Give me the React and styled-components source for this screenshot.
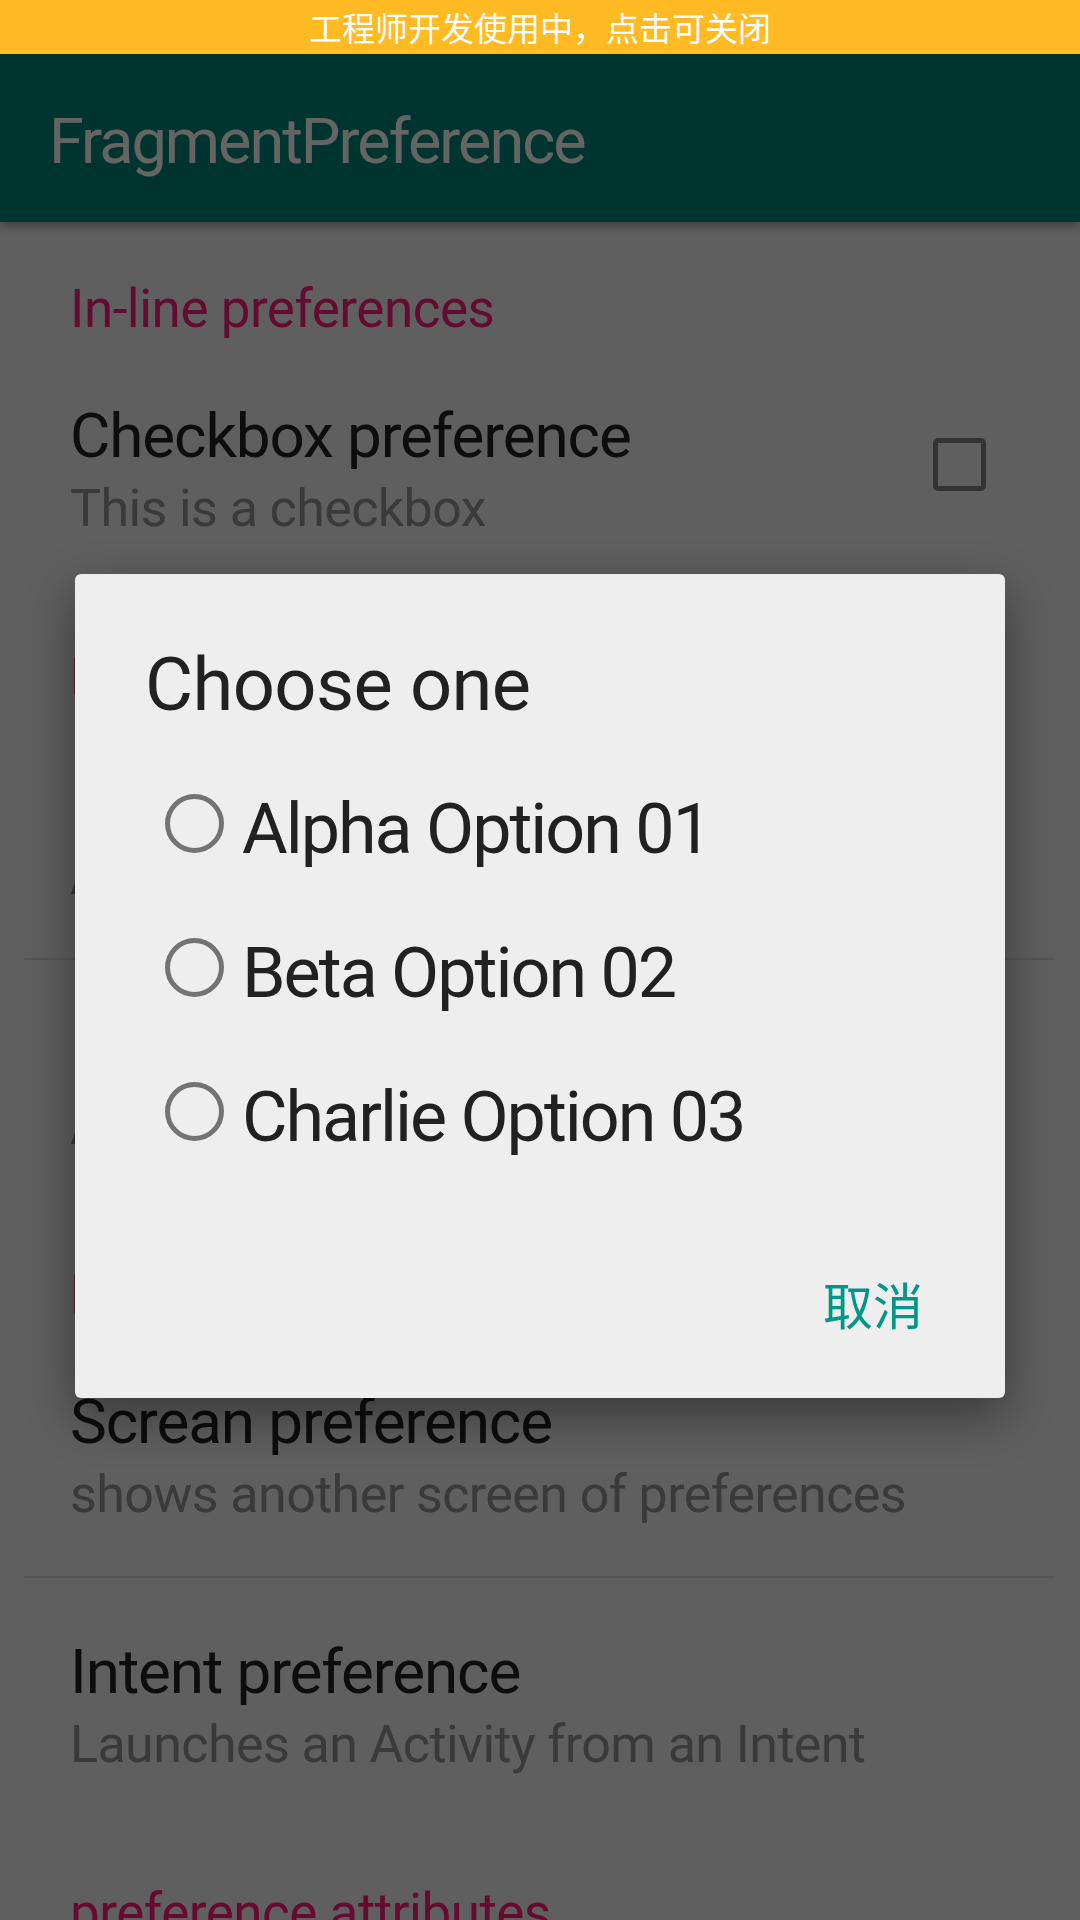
import React from 'react';
import styled, { createGlobalStyle } from 'styled-components';

const GlobalStyle = createGlobalStyle`
  html, body {
    margin: 0;
    padding: 0;
  }
  body {
    width: 1080px;
    height: 1920px;
    overflow: hidden;
    background: #eeeeee;
    font-family: Roboto, "Noto Sans CJK SC", sans-serif;
  }
`;

const groups = [
  {
    title: 'In-line preferences',
    items: [{ title: 'Checkbox preference', summary: 'This is a checkbox', checkbox: true }],
  },
  {
    title: 'Dialog-based preferences',
    items: [
      { title: 'Edit text preference', summary: 'An example that uses an edit text dialog' },
      { title: 'List preference', summary: 'An example that uses a list dialog' },
    ],
  },
  {
    title: 'Launch preferences',
    items: [
      { title: 'Screan preference', summary: 'shows another screen of preferences' },
      { title: 'Intent preference', summary: 'Launches an Activity from an Intent' },
    ],
  },
  {
    title: 'preference attributes',
    items: [{ title: 'Parent checkbox preference', summary: 'This is visually a parent', checkbox: true }],
  },
];

const options = ['Alpha Option 01', 'Beta Option 02', 'Charlie Option 03'];

const App = () => {
  return (
    <Page>
      <GlobalStyle />
      <DevBanner>工程师开发使用中，点击可关闭</DevBanner>
      <AppBar>
        <AppTitle>FragmentPreference</AppTitle>
      </AppBar>
      <List>
        {groups.map((group) => (
          <section key={group.title}>
            <Category>{group.title}</Category>
            {group.items.map((item, i) => (
              <React.Fragment key={item.title}>
                {i > 0 && <Divider />}
                <Item>
                  <ItemText>
                    <ItemTitle>{item.title}</ItemTitle>
                    <ItemSummary>{item.summary}</ItemSummary>
                  </ItemText>
                  {item.checkbox && <CheckBox />}
                </Item>
              </React.Fragment>
            ))}
          </section>
        ))}
      </List>
      <Scrim />
      <Dialog>
        <DialogTitle>Choose one</DialogTitle>
        <Options>
          {options.map((label) => (
            <Option key={label}>
              <Radio />
              <OptionLabel>{label}</OptionLabel>
            </Option>
          ))}
        </Options>
        <Actions>
          <TextButton>取消</TextButton>
        </Actions>
      </Dialog>
    </Page>
  );
};

export default App;

const Page = styled.div`
  position: relative;
  width: 1080px;
  height: 1920px;
  overflow: hidden;
  background: #eeeeee;
`;

const DevBanner = styled.div`
  position: relative;
  z-index: 3;
  height: 54px;
  line-height: 54px;
  background: #ffba24;
  color: #ffffff;
  text-align: center;
  font-family: "Noto Sans CJK SC", sans-serif;
  font-size: 33px;
`;

const AppBar = styled.header`
  height: 168px;
  display: flex;
  align-items: center;
  padding-left: 49px;
  background: #008577;
  box-shadow: 0 4px 10px rgba(0, 0, 0, 0.35);
  position: relative;
  z-index: 1;
`;

const AppTitle = styled.h1`
  margin: 0;
  padding-top: 7px;
  font-size: 63px;
  font-weight: 400;
  letter-spacing: -2px;
  color: #fafafa;
`;

const List = styled.main`
  display: flex;
  flex-direction: column;
`;

const Category = styled.h2`
  margin: 0;
  padding: 55px 0 1px 70px;
  font-size: 53px;
  line-height: 64px;
  font-weight: 400;
  letter-spacing: -0.5px;
  color: #fc1c76;
`;

const Item = styled.div`
  display: flex;
  align-items: flex-start;
  padding: 58px 94px 44px 70px;
`;

const ItemText = styled.div`
  flex: 1;
  display: flex;
  flex-direction: column;
`;

const ItemTitle = styled.div`
  font-size: 62px;
  line-height: 72px;
  letter-spacing: -1.1px;
  color: #212121;
`;

const ItemSummary = styled.div`
  font-size: 52px;
  line-height: 74px;
  letter-spacing: -0.6px;
  color: #919191;
  white-space: nowrap;
`;

const CheckBox = styled.span`
  box-sizing: border-box;
  width: 53px;
  height: 53px;
  margin-top: 38px;
  border: 5.5px solid #808080;
  border-radius: 5px;
`;

const Divider = styled.hr`
  margin: 0 25px 0 24px;
  border: 0;
  height: 2px;
  background: #d4d4d4;
`;

const Scrim = styled.div`
  position: absolute;
  inset: 0;
  z-index: 2;
  background: rgba(0, 0, 0, 0.6);
`;

const Dialog = styled.div`
  position: absolute;
  z-index: 2;
  top: 574px;
  left: 75px;
  width: 930px;
  box-sizing: border-box;
  display: flex;
  flex-direction: column;
  padding: 67px 0 65px;
  background: #eeeeee;
  border-radius: 6px;
  box-shadow: 0 18px 48px rgba(0, 0, 0, 0.4);
`;

const DialogTitle = styled.h3`
  margin: 0 0 22px;
  padding-left: 70px;
  font-size: 74px;
  line-height: 88px;
  font-weight: 400;
  letter-spacing: -0.6px;
  color: #212121;
`;

const Options = styled.div`
  display: flex;
  flex-direction: column;
`;

const Option = styled.div`
  height: 144px;
  display: flex;
  align-items: center;
  gap: 18px;
  padding-left: 90px;
`;

const Radio = styled.span`
  box-sizing: border-box;
  width: 59px;
  height: 59px;
  border: 5.5px solid #737373;
  border-radius: 50%;
  flex-shrink: 0;
`;

const OptionLabel = styled.span`
  padding-top: 12px;
  font-size: 70px;
  line-height: 84px;
  letter-spacing: -2px;
  color: #212121;
`;

const Actions = styled.div`
  display: flex;
  justify-content: flex-end;
  margin-top: 90px;
  padding-right: 82px;
`;

const TextButton = styled.span`
  font-family: "Noto Sans CJK SC", sans-serif;
  font-size: 50px;
  line-height: 60px;
  color: #009688;
`;
